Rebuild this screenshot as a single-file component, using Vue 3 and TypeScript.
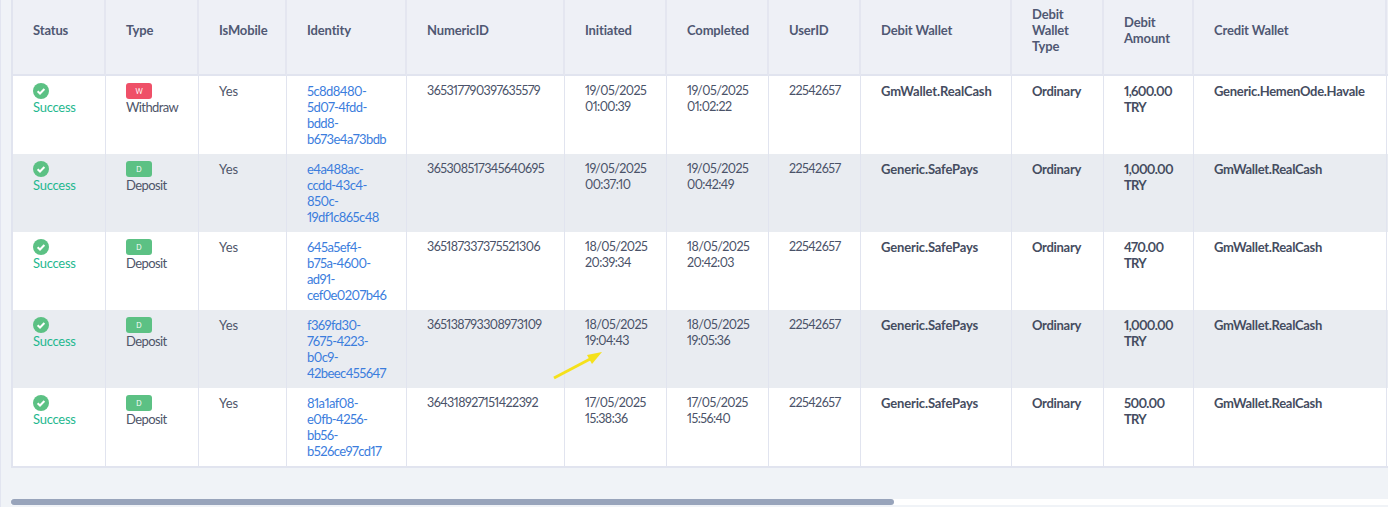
<script setup lang="ts">
interface Row {
  letter: string
  type: string
  id: string[]
  numeric: string
  init: string[]
  done: string[]
  debit: string
  amount: string
  credit: string
}
const rows: Row[] = [
  { letter: 'W', type: 'Withdraw', id: ['5c8d8480-', '5d07-4fdd-', 'bdd8-', 'b673e4a73bdb'], numeric: '365317790397635579', init: ['19/05/2025', '01:00:39'], done: ['19/05/2025', '01:02:22'], debit: 'GmWallet.RealCash', amount: '1,600.00', credit: 'Generic.HemenOde.Havale' },
  { letter: 'D', type: 'Deposit', id: ['e4a488ac-', 'ccdd-43c4-', '850c-', '19df1c865c48'], numeric: '365308517345640695', init: ['19/05/2025', '00:37:10'], done: ['19/05/2025', '00:42:49'], debit: 'Generic.SafePays', amount: '1,000.00', credit: 'GmWallet.RealCash' },
  { letter: 'D', type: 'Deposit', id: ['645a5ef4-', 'b75a-4600-', 'ad91-', 'cef0e0207b46'], numeric: '365187337375521306', init: ['18/05/2025', '20:39:34'], done: ['18/05/2025', '20:42:03'], debit: 'Generic.SafePays', amount: '470.00', credit: 'GmWallet.RealCash' },
  { letter: 'D', type: 'Deposit', id: ['f369fd30-', '7675-4223-', 'b0c9-', '42beec455647'], numeric: '365138793308973109', init: ['18/05/2025', '19:04:43'], done: ['18/05/2025', '19:05:36'], debit: 'Generic.SafePays', amount: '1,000.00', credit: 'GmWallet.RealCash' },
  { letter: 'D', type: 'Deposit', id: ['81a1af08-', 'e0fb-4256-', 'bb56-', 'b526ce97cd17'], numeric: '364318927151422392', init: ['17/05/2025', '15:38:36'], done: ['17/05/2025', '15:56:40'], debit: 'Generic.SafePays', amount: '500.00', credit: 'GmWallet.RealCash' },
]
const widths = [93, 93, 88, 120, 158, 102, 102, 92, 151, 92, 90, 193, 40]
const heads: string[][] = [['Status'], ['Type'], ['IsMobile'], ['Identity'], ['NumericID'], ['Initiated'], ['Completed'], ['UserID'], ['Debit Wallet'], ['Debit', 'Wallet', 'Type'], ['Debit', 'Amount'], ['Credit Wallet'], []]
</script>

<template>
  <div class="page">
    <div class="content">
      <table class="grid">
        <colgroup>
          <col v-for="(w, i) in widths" :key="i" :style="{ width: w + 'px' }" />
        </colgroup>
        <thead>
          <tr>
            <th v-for="(h, i) in heads" :key="i">
              <div v-for="line in h" :key="line">{{ line }}</div>
            </th>
          </tr>
        </thead>
        <tbody>
          <tr v-for="r in rows" :key="r.numeric">
            <td>
              <svg class="check" width="16" height="16" viewBox="0 0 16 16">
                <circle cx="8" cy="8" r="8" fill="#5cc184" />
                <path d="M4.6 8.2 7 10.5 11.4 6" fill="none" stroke="#fff" stroke-width="2" />
              </svg>
              <div class="success">Success</div>
            </td>
            <td>
              <div class="badge" :class="r.letter === 'W' ? 'red' : 'green'">{{ r.letter }}</div>
              <div class="type">{{ r.type }}</div>
            </td>
            <td>Yes</td>
            <td class="link">
              <div v-for="l in r.id" :key="l">{{ l }}</div>
            </td>
            <td class="digits">{{ r.numeric }}</td>
            <td class="digits"><div v-for="l in r.init" :key="l">{{ l }}</div></td>
            <td class="digits"><div v-for="l in r.done" :key="l">{{ l }}</div></td>
            <td class="digits">22542657</td>
            <td class="bold wallet">{{ r.debit }}</td>
            <td class="bold">Ordinary</td>
            <td class="bold amount"><div>{{ r.amount }}</div><div>TRY</div></td>
            <td class="bold">{{ r.credit }}</td>
            <td></td>
          </tr>
        </tbody>
      </table>
      <svg class="arrow" width="52" height="34" viewBox="0 0 52 34">
        <path d="M1 30 40 9.5" stroke="#f5e11b" stroke-width="3" fill="none" />
        <path d="M49 4 34 7 39 16Z" fill="#f5e11b" />
      </svg>
    </div>
    <div class="track"><div class="thumb"></div></div>
  </div>
</template>

<style>
html, body { margin: 0; background: #f0f3f7; overflow: hidden; }
</style>

<style scoped>
.page {
  width: 1388px;
  height: 507px;
  overflow: hidden;
  background: #f0f3f7;
  border-left: 1px solid #e2e5f0;
  box-sizing: border-box;
  padding-left: 10px;
  font-family: "Lato", "Liberation Sans", sans-serif;
  font-size: 13px;
  line-height: 16px;
  color: #4e5569;
  font-variant-numeric: proportional-nums;
}
.content {
  position: relative;
  height: 499px;
}
.grid {
  table-layout: fixed;
  border-collapse: separate;
  border-spacing: 0;
  width: 1376px;
  border-left: 2px solid #e1e4ef;
  border-bottom: 2px solid #e1e4ef;
  background: #fff;
}
th {
  background: #eef0f6;
  border-right: 2px solid #e4e6f0;
  border-bottom: 2px solid #e1e4ef;
  padding: 6px 10px 20px 20px;
  height: 48px;
  text-align: left;
  vertical-align: middle;
  font-weight: 700;
  color: #505873;
  box-sizing: content-box;
  letter-spacing: -0.15px;
}
td {
  border-right: 1px solid #e1e4ef;
  padding: 7px 10px 7px 20px;
  height: 64px;
  vertical-align: top;
  box-sizing: content-box;
  overflow: hidden;
}
tbody tr:nth-child(even) td { background: #e9ecf1; }
.check { display: block; }
.success { color: #1fb88f; letter-spacing: -0.25px; }
.type { letter-spacing: -0.6px; }
.badge {
  width: 26px;
  height: 16px;
  border-radius: 3px;
  color: #fff;
  font-size: 7px;
  line-height: 16px;
  text-align: center;
}
.red { background: #ef5068; }
.green { background: #5cc184; }
.link { color: #3b7ddd; letter-spacing: -0.6px; }
.digits { font-size: 12.5px; letter-spacing: -0.55px; color: #4a5268; }
.bold { font-weight: 700; color: #454c60; letter-spacing: -0.3px; }
.wallet { letter-spacing: -0.15px; }
.amount { letter-spacing: -0.7px; }
.arrow {
  position: absolute;
  left: 542px;
  top: 348px;
}
.track {
  height: 6px;
  background: #fff;
}
.thumb {
  width: 883px;
  height: 6px;
  border-radius: 3px;
  background: #98a4bb;
}
</style>
